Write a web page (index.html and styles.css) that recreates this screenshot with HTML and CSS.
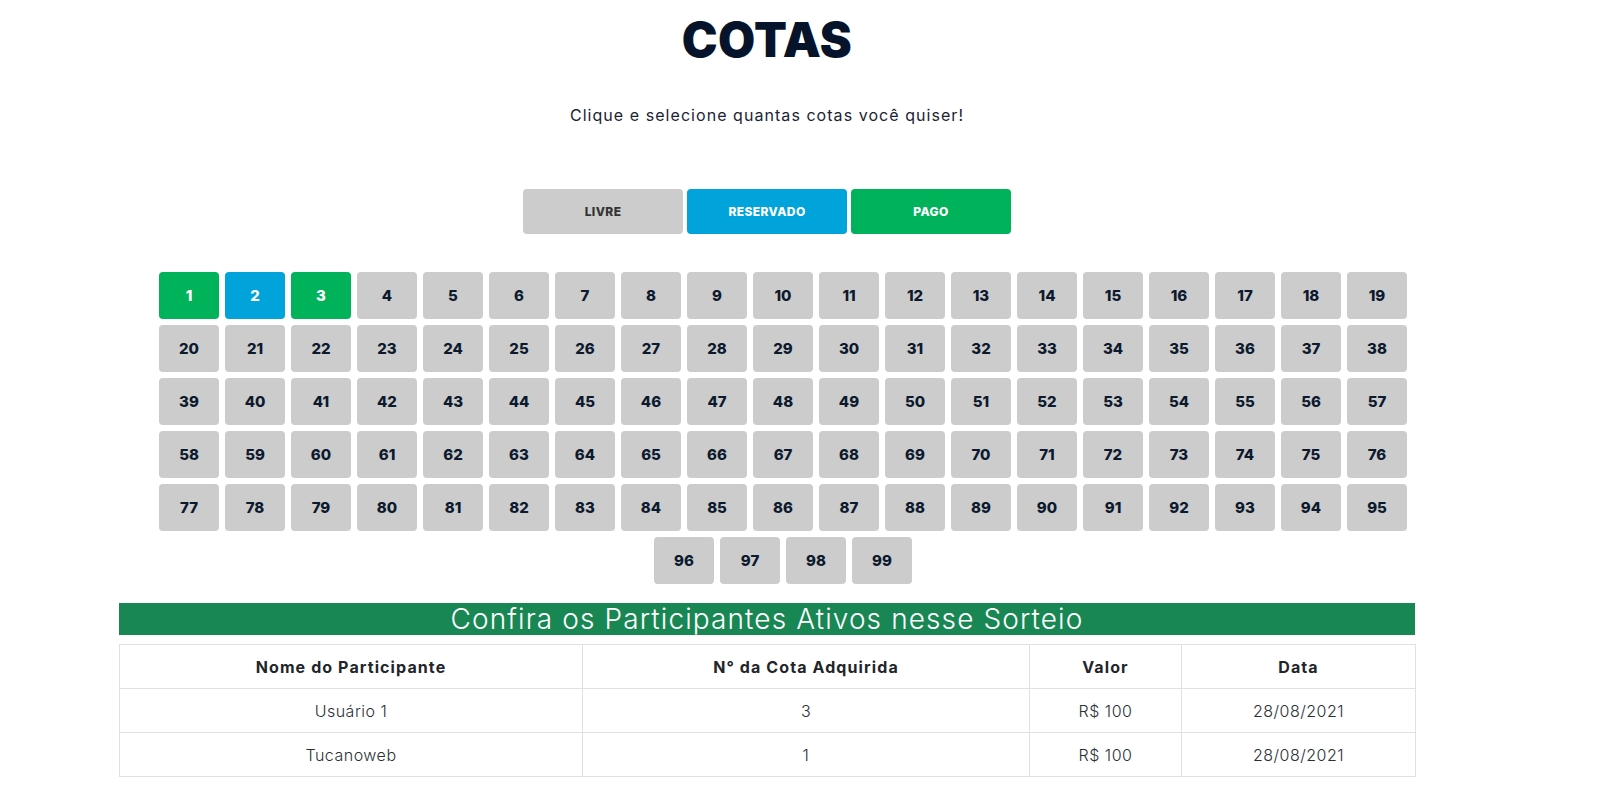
FILE: index.html
```html
<!DOCTYPE html>
<html lang="pt-BR">
<head>
<meta charset="utf-8">
<title>Cotas</title>
<link rel="stylesheet" href="styles.css">
</head>
<body>
<div class="page">
  <h1 class="title">COTAS</h1>
  <p class="subtitle">Clique e selecione quantas cotas você quiser!</p>
  <div class="legend">
    <button class="legend-btn livre">LIVRE</button>
    <button class="legend-btn reservado">RESERVADO</button>
    <button class="legend-btn pago">PAGO</button>
  </div>
  <div class="grid" id="grid"></div>
  <div class="participants">
    <h2 class="bar">Confira os Participantes Ativos nesse Sorteio</h2>
    <table class="tbl">
      <colgroup>
        <col class="c1"><col class="c2"><col class="c3"><col class="c4">
      </colgroup>
      <thead>
        <tr><th>Nome do Participante</th><th>N° da Cota Adquirida</th><th>Valor</th><th>Data</th></tr>
      </thead>
      <tbody>
        <tr><td>Usuário 1</td><td>3</td><td>R$ 100</td><td>28/08/2021</td></tr>
        <tr><td>Tucanoweb</td><td>1</td><td>R$ 100</td><td>28/08/2021</td></tr>
      </tbody>
    </table>
  </div>
</div>
<script src="script.js"></script>
</body>
</html>
```
FILE: script.js
```js
(function () {
  var grid = document.getElementById('grid');
  var states = { 1: 'pago', 2: 'reservado', 3: 'pago' };
  for (var i = 1; i <= 99; i++) {
    var b = document.createElement('button');
    b.className = 'cota ' + (states[i] || 'livre');
    b.textContent = i;
    grid.appendChild(b);
  }
})();
```
FILE: styles.css
```css
* { box-sizing: border-box; }
body {
  margin: 0;
  background: #fff;
  font-family: Inter, "Open Sans", sans-serif;
  color: #0a1628;
}
.page {
  width: 1534px;
  display: flex;
  flex-direction: column;
  align-items: center;
}
.title {
  margin: 11px 0 0;
  font-size: 48px;
  line-height: 58px;
  font-weight: 900;
  color: #06142b;
  letter-spacing: 0.3px;
}
.subtitle {
  margin: 36px 0 0;
  font-size: 16px;
  line-height: 20px;
  font-weight: 400;
  letter-spacing: 1.05px;
  color: #1c2333;
}
.legend {
  margin-top: 64px;
  display: flex;
  gap: 4px;
}
.legend-btn {
  width: 160px;
  height: 45px;
  border: 0;
  border-radius: 4px;
  font-family: Inter, sans-serif;
  font-size: 12px;
  font-weight: 800;
  letter-spacing: 0.4px;
  color: #fff;
  padding: 0;
}
.legend-btn.livre { background: #cccccc; color: #333; }
.legend-btn.reservado { background: #00a3da; }
.legend-btn.pago { background: #00b35a; }

.grid {
  margin-top: 38px;
  margin-left: 32px;
  width: 1248px;
  display: flex;
  flex-wrap: wrap;
  justify-content: center;
  gap: 6px;
}
.cota {
  width: 60px;
  height: 47px;
  border: 0;
  border-radius: 4px;
  background: #cccccc;
  font-family: Inter, sans-serif;
  font-size: 15px;
  font-weight: 800;
  color: #0d1a2e;
  padding: 0;
}
.cota.pago { background: #00b35a; color: #fff; }
.cota.reservado { background: #00a3da; color: #fff; }

.participants {
  margin-top: 19px;
  width: 1296px;
}
.bar {
  margin: 0;
  height: 32px;
  background: #198754;
  color: #fff;
  text-align: center;
  font-size: 28px;
  line-height: 32px;
  font-weight: 300;
  letter-spacing: 1.1px;
}
.tbl {
  margin-top: 9px;
  width: 100%;
  border-collapse: collapse;
  table-layout: fixed;
}
.c1 { width: 463px; }
.c2 { width: 447px; }
.c3 { width: 152px; }
.c4 { width: 234px; }
.tbl th, .tbl td {
  border: 1px solid #dee2e6;
  height: 44px;
  padding: 0 8px;
  text-align: center;
  font-size: 16px;
}
.tbl th { font-weight: 700; color: #212529; letter-spacing: 1.1px; }
.tbl td { font-weight: 300; color: #2b2f36; letter-spacing: 0.5px; }
```
